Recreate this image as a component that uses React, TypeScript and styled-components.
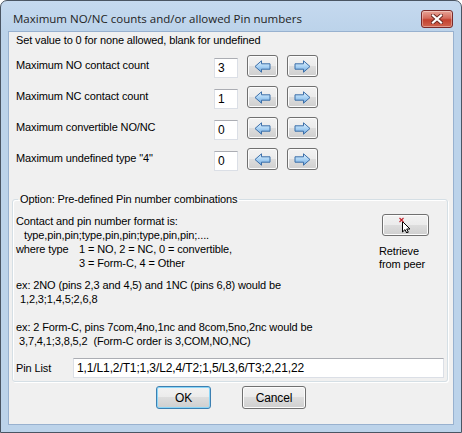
import React from 'react';
import styled, { createGlobalStyle } from 'styled-components';

const GlobalStyle = createGlobalStyle`
    body {
        margin: 0;
        background: #ffffff;
    }
`

const Window = styled.div`
    box-sizing: border-box;
    width: 462px;
    height: 433px;
    display: flex;
    flex-direction: column;
    border: 1px solid #4a5563;
    border-radius: 7px 7px 0 0;
    background: linear-gradient(to bottom, #c5d9ef 0px, #bcd3ea 30px, #bcd3ea 100%);
    font-family: "Liberation Sans", Arial, sans-serif;
    font-size: 11px;
    letter-spacing: -0.12px;
    color: #000;
`

const TitleBar = styled.div`
    height: 30px;
    display: flex;
    align-items: flex-start;
    justify-content: space-between;
    padding: 0 8px 0 12px;
`

const Title = styled.span`
    margin-top: 10px;
    font-family: "Open Sans", "Noto Sans", sans-serif;
    font-size: 11.5px;
    letter-spacing: 0;
    line-height: 16px;
    color: #1e1e1e;
`

const CloseButton = styled.div`
    box-sizing: border-box;
    margin-top: 9px;
    width: 32px;
    height: 18px;
    display: flex;
    align-items: center;
    justify-content: center;
    border: 1px solid #7a2a2a;
    border-radius: 3px;
    background: linear-gradient(to bottom, #e8a497 0%, #d46b5c 45%, #c3412f 55%, #d0644f 100%);
    box-shadow: inset 0 0 0 1px rgba(255, 255, 255, 0.35);
`

const Client = styled.div`
    flex: 1;
    margin: 0 7px 7px 7px;
    border: 1px solid #98b1cf;
    background: #f0f0f0;
    display: flex;
    flex-direction: column;
`

const Hint = styled.div`
    margin-top: 1px;
    padding-left: 7px;
    line-height: 14px;
`

const Rows = styled.div`
    margin-top: 8px;
    padding-left: 7px;
    display: flex;
    flex-direction: column;
    gap: 8px;
`

const Row = styled.div`
    display: grid;
    grid-template-columns: 189px 24px 31px 31px;
    column-gap: 9px;
    align-items: start;
`

const RowLabel = styled.span`
    line-height: 14px;
    margin-top: 3px;
`

const NumberBox = styled.div`
    box-sizing: border-box;
    margin-top: 3px;
    height: 20px;
    padding: 3px 0 0 3px;
    background: #fff;
    border: 1px solid #dbdfe6;
    border-top-color: #abadb3;
    font-size: 12px;
    line-height: 13px;
`

const PushButton = styled.div<{ width: number; height?: number; focused?: boolean }>`
    box-sizing: border-box;
    width: ${({ width }) => width}px;
    height: ${({ height = 22 }) => height}px;
    display: flex;
    align-items: center;
    justify-content: center;
    border: 1px solid ${({ focused }) => (focused ? '#3c7fb1' : '#707070')};
    border-radius: 3px;
    background: linear-gradient(to bottom, #f2f2f2 0%, #ebebeb 50%, #dddddd 50%, #cfcfcf 100%);
    box-shadow: inset 0 0 0 1px ${({ focused }) => (focused ? '#8ad6f8' : '#fcfcfc')};
    font-size: 12px;
`

const Group = styled.fieldset`
    margin: 21px 5px 0 3px;
    padding: 8px 3px 3px 3px;
    border: 1px solid #d5dfe5;
    border-radius: 3px;
    box-shadow: inset 1px 1px 0 #ffffff, 1px 1px 0 #ffffff;
    min-width: 0;
`

const Legend = styled.legend`
    margin-left: 2px;
    padding: 0 2px;
    line-height: 14px;
`

const GroupBody = styled.div`
    display: flex;
    justify-content: space-between;
    align-items: flex-start;
`

const Notes = styled.div`
    display: flex;
    flex-direction: column;
`

const Para = styled.div<{ gap: number }>`
    margin-top: ${({ gap }) => gap}px;
`

const Line = styled.div<{ indent?: number }>`
    line-height: 14px;
    white-space: pre;
    padding-left: ${({ indent = 0 }) => indent}px;
`

const TypeTab = styled.span`
    display: inline-block;
    width: 63px;
`

const RetrieveBlock = styled.div`
    width: 50px;
    margin-right: 15px;
    display: flex;
    flex-direction: column;
`

const RetrieveButton = styled(PushButton)`
    margin-left: 3px;
`

const RetrieveCaption = styled.div`
    margin-top: 9px;
    line-height: 13px;
`

const PinRow = styled.div`
    margin-top: 10px;
    display: grid;
    grid-template-columns: 57px 1fr;
    align-items: center;
`

const PinBox = styled.div`
    box-sizing: border-box;
    height: 20px;
    padding: 2px 0 0 3px;
    background: #fff;
    border: 1px solid #dbdfe6;
    border-top-color: #abadb3;
    font-size: 12px;
    line-height: 15px;
`

const Footer = styled.div`
    margin-top: 4px;
    display: flex;
    justify-content: center;
    gap: 31px;
`

const ArrowIcon = ({ right = false }: { right?: boolean }) => (
    <svg width="17" height="13" viewBox="0 0 17 13" style={right ? { transform: 'scaleX(-1)' } : undefined}>
        <defs>
            <linearGradient id="arrowFill" x1="0" y1="0" x2="0" y2="1">
                <stop offset="0" stopColor="#e6f3fd" />
                <stop offset="0.5" stopColor="#a9d2f4" />
                <stop offset="1" stopColor="#6fa6dc" />
            </linearGradient>
        </defs>
        <path d="M1 6.5 L7.5 0.8 L7.5 3.8 L16 3.8 L16 9.2 L7.5 9.2 L7.5 12.2 Z" fill="url(#arrowFill)" stroke="#3b6ea8" strokeWidth="1" strokeLinejoin="round" />
    </svg>
)

const CloseGlyph = () => (
    <svg width="12" height="10" viewBox="0 0 12 10">
        <path d="M2 1.5 L10 8.5 M10 1.5 L2 8.5" stroke="#6b2a24" strokeWidth="4" strokeLinecap="square" />
        <path d="M2 1.5 L10 8.5 M10 1.5 L2 8.5" stroke="#ffffff" strokeWidth="2.2" strokeLinecap="square" />
    </svg>
)

const PointerIcon = () => (
    <svg width="16" height="16" viewBox="0 0 16 16">
        <path d="M4.5 4.5 L4.5 15 L7 12.6 L8.7 16 L10.3 15.2 L8.7 12 L12 12 Z" fill="#ffffff" stroke="#000000" strokeWidth="1" strokeLinejoin="miter" />
        <path d="M1.5 1 L5.5 5 M5.5 1 L1.5 5" stroke="#c0202a" strokeWidth="1.1" />
    </svg>
)

const limits = [
    { label: 'Maximum NO contact count', value: '3' },
    { label: 'Maximum NC contact count', value: '1' },
    { label: 'Maximum convertible NO/NC', value: '0' },
    { label: 'Maximum undefined type "4"', value: '0' },
]

const App = () => (
    <>
        <GlobalStyle />
        <Window>
            <TitleBar>
                <Title>Maximum NO/NC counts and/or allowed Pin numbers</Title>
                <CloseButton><CloseGlyph /></CloseButton>
            </TitleBar>
            <Client>
                <Hint>Set value to 0 for none allowed, blank for undefined</Hint>
                <Rows>
                    {limits.map(({ label, value }) => (
                        <Row key={label}>
                            <RowLabel>{label}</RowLabel>
                            <NumberBox>{value}</NumberBox>
                            <PushButton width={31}><ArrowIcon /></PushButton>
                            <PushButton width={31}><ArrowIcon right /></PushButton>
                        </Row>
                    ))}
                </Rows>
                <Group>
                    <Legend>Option: Pre-defined Pin number combinations</Legend>
                    <GroupBody>
                        <Notes>
                            <Para gap={0}>
                                <Line>Contact and pin number format is:</Line>
                                <Line indent={8}>type,pin,pin;type,pin,pin;type,pin,pin;....</Line>
                                <Line><TypeTab>where type</TypeTab>1 = NO, 2 = NC, 0 = convertible,</Line>
                                <Line indent={63}>3 = Form-C, 4 = Other</Line>
                            </Para>
                            <Para gap={8}>
                                <Line>ex: 2NO (pins 2,3 and 4,5) and 1NC (pins 6,8) would be</Line>
                                <Line indent={4}>1,2,3;1,4,5;2,6,8</Line>
                            </Para>
                            <Para gap={14}>
                                <Line>ex: 2 Form-C, pins 7com,4no,1nc and 8com,5no,2nc would be</Line>
                                <Line indent={3}>3,7,4,1;3,8,5,2  (Form-C order is 3,COM,NO,NC)</Line>
                            </Para>
                        </Notes>
                        <RetrieveBlock>
                            <RetrieveButton width={47}><PointerIcon /></RetrieveButton>
                            <RetrieveCaption>Retrieve<br />from peer</RetrieveCaption>
                        </RetrieveBlock>
                    </GroupBody>
                    <PinRow>
                        <span>Pin List</span>
                        <PinBox>1,1/L1,2/T1;1,3/L2,4/T2;1,5/L3,6/T3;2,21,22</PinBox>
                    </PinRow>
                </Group>
                <Footer>
                    <PushButton width={55} height={23} focused>OK</PushButton>
                    <PushButton width={64} height={23}>Cancel</PushButton>
                </Footer>
            </Client>
        </Window>
    </>
)

export default App;
